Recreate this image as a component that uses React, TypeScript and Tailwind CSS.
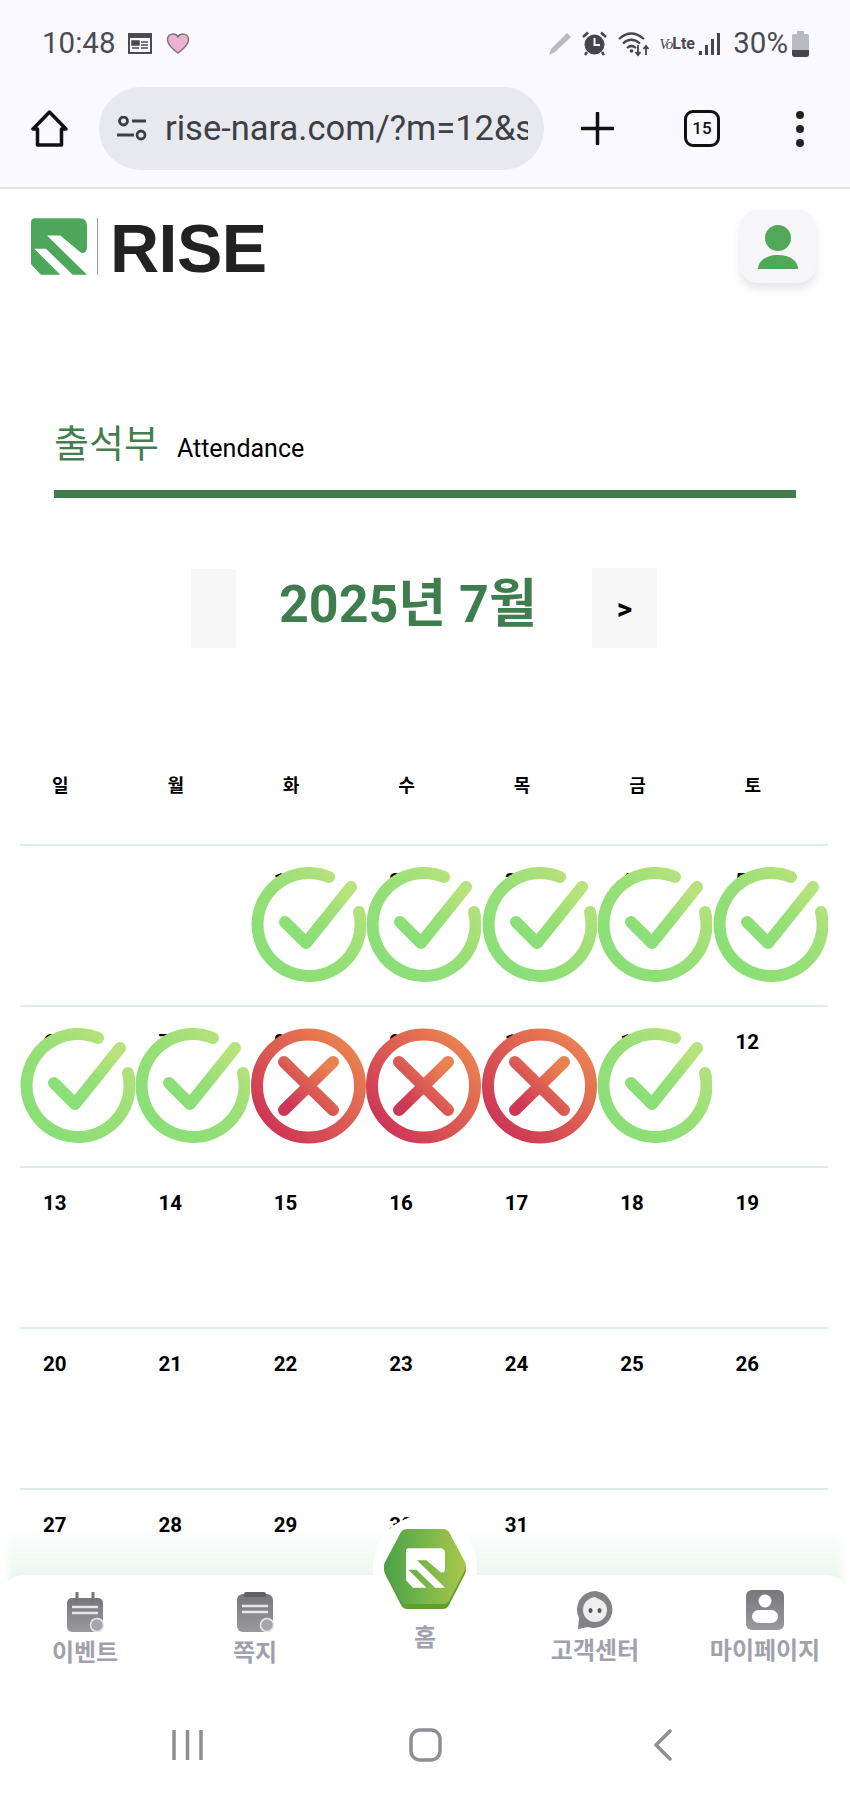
const font = "font-[Roboto,'Noto_Sans_CJK_KR',sans-serif]";

const logoPath =
  "M12 0H145Q168 0 168 22V85Q168 108 150 104L88 52H48L168 170H125L45 92H10L88 170H30L0 138V12Q0 0 12 0Z";

const weeks: (number | null)[][] = [
  [null, null, 1, 2, 3, 4, 5],
  [6, 7, 8, 9, 10, 11, 12],
  [13, 14, 15, 16, 17, 18, 19],
  [20, 21, 22, 23, 24, 25, 26],
  [27, 28, 29, 30, 31, null, null],
];

const stamps: Record<number, "ok" | "no"> = {
  1: "ok",
  2: "ok",
  3: "ok",
  4: "ok",
  5: "ok",
  6: "ok",
  7: "ok",
  8: "no",
  9: "no",
  10: "no",
  11: "ok",
};

const Stamp = ({ kind }: { kind: "ok" | "no" }) => (
  <svg viewBox="0 0 115 116" className="absolute left-0 top-[21px] w-[115px] h-[116px]">
    <defs>
      <linearGradient id="okGrad" x1="0.1" y1="0.9" x2="0.9" y2="0.1">
        <stop offset="0" stopColor="#8adf78" />
        <stop offset="0.5" stopColor="#96df76" />
        <stop offset="1" stopColor="#b8e27c" />
      </linearGradient>
      <linearGradient id="noGrad" x1="0.1" y1="0.9" x2="0.9" y2="0.1">
        <stop offset="0" stopColor="#cd3656" />
        <stop offset="1" stopColor="#ea8150" />
      </linearGradient>
    </defs>
    <circle cx="57.5" cy="58" r="46" fill="#fff" />
    {kind === "ok" ? (
      <g fill="none" stroke="url(#okGrad)" strokeWidth="12" strokeLinecap="round" strokeLinejoin="round">
        <path d="M78 10A51.500 51.500 0 1 0 108 45" />
        <path d="M34 55L55 76L100 20" />
      </g>
    ) : (
      <g fill="none" stroke="url(#noGrad)" strokeLinecap="round">
        <circle cx="57.5" cy="58" r="51.500" strokeWidth="12" />
        <path d="M33 34L82 82M82 34L33 82" strokeWidth="12" />
      </g>
    )}
  </svg>
);

const StatusIcons = () => (
  <div className="ml-auto flex items-center pr-[41px] text-[#4a4a50]">
    {/* pencil */}
    <svg viewBox="0 0 25 25" className="w-[25px] h-[25px]">
      <path d="M19 2L23 6L7 21L1 24L3 18Z" fill="#b9b9bf" />
    </svg>
    {/* alarm */}
    <svg viewBox="0 0 25 25" className="ml-[9px] w-[25px] h-[25px]">
      <circle cx="12.5" cy="13.5" r="10" fill="#45454b" />
      <path d="M1 6L6 1.500M24 6L19 1.500M5 21L3 24M20 21L22 24" stroke="#45454b" strokeWidth="2.500" />
      <path d="M12.500 7V14H18" stroke="#f9f9ff" strokeWidth="2" fill="none" />
    </svg>
    {/* wifi */}
    <svg viewBox="0 0 32 26" className="ml-[11px] w-[32px] h-[26px]" fill="none" stroke="#45454b" strokeWidth="2.200">
      <path d="M1 8Q13 -3 26 8M5 12.500Q13 5 22 12.500M9 17Q13.500 13 18 17" />
      <circle cx="13.500" cy="20" r="1.800" fill="#45454b" stroke="none" />
      <path d="M20 14V24M17.500 21L20 24L22.500 21M28 24V15M25.500 18L28 15L30.500 18" strokeWidth="1.800" />
    </svg>
    {/* volte */}
    <div className="ml-[9px] w-[33px] flex items-baseline whitespace-nowrap">
      <span className="font-['Liberation_Serif',serif] italic text-[15px] leading-none tracking-[-1px]">Vo</span>
      <span className={`${font} font-bold text-[16px] leading-none`}>Lte</span>
    </div>
    {/* signal */}
    <svg viewBox="0 0 22 26" className="ml-[7px] w-[22px] h-[26px]" fill="#45454b">
      <rect x="0" y="20" width="3" height="4" />
      <rect x="6" y="14" width="3" height="10" />
      <rect x="12" y="8" width="3" height="16" />
      <rect x="18" y="2" width="3" height="22" />
    </svg>
    <span className={`${font} ml-[12px] text-[29.5px] leading-none`}>30%</span>
    {/* battery */}
    <svg viewBox="0 0 17 26" className="ml-[4px] w-[17px] h-[26px]">
      <path d="M5 0H12V3H15Q17 3 17 5V23Q17 26 14 26H3Q0 26 0 23V5Q0 3 2 3H5Z" fill="#b9b9c0" />
      <path d="M0 19H17V23Q17 26 14 26H3Q0 26 0 23Z" fill="#45454b" />
    </svg>
  </div>
);

const BrowserBar = () => (
  <div className="bg-[#f9f9ff] h-[189px] border-b-2 border-[#e3e3e6]">
    <div className="h-[87px] pl-[42px] flex items-center">
      <span className={`${font} text-[29.5px] leading-none text-[#4a4a50]`}>10:48</span>
      <svg viewBox="0 0 24 21" className="ml-[13px] w-[24px] h-[21px]">
        <rect x="1" y="1" width="22" height="19" fill="none" stroke="#4a4a50" strokeWidth="2" />
        <rect x="1" y="1" width="22" height="4" fill="#4a4a50" />
        <path d="M4 8H11V12H4ZM13 9H20M13 12H20M13 15H20M4 15H11" fill="#4a4a50" stroke="#4a4a50" strokeWidth="1.500" />
      </svg>
      <svg viewBox="0 0 24 22" className="ml-[14px] w-[24px] h-[21px]">
        <path d="M12 21C4 15 1 11 1 7C1 3 4 1 7 1C9 1 11 2 12 4C13 2 15 1 17 1C20 1 23 3 23 7C23 11 20 15 12 21Z" fill="#efb1d1" stroke="#77727a" strokeWidth="1.500" />
      </svg>
      <StatusIcons />
    </div>
    <div className="flex items-center h-[83px] pl-[31px]">
      <svg viewBox="0 0 37 37" className="w-[37px] h-[37px]" fill="none" stroke="#111" strokeWidth="3.500" strokeLinejoin="round">
        <path d="M18.500 2L2 19H6.500V35H30.500V19H35Z" />
      </svg>
      <div className="ml-[31px] w-[445px] h-[83px] rounded-full bg-[#e8e9ee] flex items-center pl-[18px]">
        <svg viewBox="0 0 30 26" className="w-[30px] h-[26px] shrink-0" fill="none" stroke="#3c3e44" strokeWidth="2.800">
          <circle cx="6.500" cy="5" r="4" />
          <path d="M15 5H29M0 19H17" />
          <circle cx="24" cy="19" r="4" />
        </svg>
        <div className={`${font} ml-[18px] w-[363px] overflow-hidden whitespace-nowrap text-[34.5px] leading-none text-[#3d3f45]`}>
          rise-nara.com/?m=12&amp;sub=1
        </div>
      </div>
      <svg viewBox="0 0 33 33" className="ml-[37px] w-[33px] h-[33px]" stroke="#111" strokeWidth="3.500" strokeLinecap="round">
        <path d="M16.500 1V32M1 16.500H32" />
      </svg>
      <div className={`${font} ml-[70px] w-[36px] h-[37px] rounded-[9px] border-[3.5px] border-[#111] flex items-center justify-center text-[17px] font-medium text-[#111] leading-none`}>
        15
      </div>
      <div className="ml-[76px] flex flex-col gap-[6px]">
        <div className="w-2 h-2 rounded-full bg-[#222]" />
        <div className="w-2 h-2 rounded-full bg-[#222]" />
        <div className="w-2 h-2 rounded-full bg-[#222]" />
      </div>
    </div>
  </div>
);

const TopBar = () => (
  <div className="flex justify-between pl-[31px] pr-[34px] h-[94px] items-start">
    <div className="mt-[27px] flex items-center">
      <svg viewBox="0 0 168 170" className="w-[56px] h-[57px]">
        <path d={logoPath} fill="#4ea65a" />
      </svg>
      <div className="ml-[10px] w-px h-[57px] bg-[#9a9a9a]" />
      <span className="ml-[12px] pt-[4px] font-['Liberation_Sans',sans-serif] font-bold text-[68px] leading-[57px] tracking-[-0.5px] text-[#222]">RISE</span>
    </div>
    <div className="mt-[21px] w-[76px] h-[73px] rounded-[18px] bg-[#f6f6f8] shadow-[0_6px_10px_rgba(0,0,0,0.1)] flex items-center justify-center">
      <svg viewBox="0 0 40 44" className="w-[40px] h-[44px]" fill="#4fa958">
        <ellipse cx="20" cy="13" rx="13" ry="13" />
        <path d="M0 44C0 36 8 30 20 30C32 30 40 36 40 44Z" />
      </svg>
    </div>
  </div>
);

const Calendar = () => (
  <div className="relative mx-[20px] w-[808px]">
    <div className={`${font} grid grid-cols-7 mt-[117px] mb-[39px] h-[40px] items-center text-[18px] font-bold text-black`}>
      {["일", "월", "화", "수", "목", "금", "토"].map((d) => (
        <div key={d} className="pl-[32px]">{d}</div>
      ))}
    </div>
    {weeks.map((week, i) => (
      <div key={i} className="grid grid-cols-7 h-[161px] border-t-2 border-[#dcefe7]">
        {week.map((day, j) => (
          <div key={j} className={`${font} relative pl-[23px] pt-[25px] text-[20.5px] leading-[20px] font-bold text-black`}>
            {day}
            {day !== null && stamps[day] && <Stamp kind={stamps[day]} />}
          </div>
        ))}
      </div>
    ))}
  </div>
);

const EventIcon = () => (
  <svg viewBox="0 0 38 40" className="w-[38px] h-[40px]">
    <defs>
      <linearGradient id="iconGrad" x1="0" y1="0" x2="0" y2="1">
        <stop offset="0" stopColor="#77777b" />
        <stop offset="1" stopColor="#9a9a9e" />
      </linearGradient>
    </defs>
    <rect x="1" y="6" width="36" height="34" rx="5" fill="url(#iconGrad)" />
    <path d="M11 0V10M27 0V10" stroke="#77777b" strokeWidth="3" strokeLinecap="round" />
    <path d="M6 15H32M6 21H32" stroke="#e8e8ea" strokeWidth="2.500" />
    <circle cx="31" cy="33" r="6.500" fill="#a6a6aa" stroke="#e8e8ea" strokeWidth="1.500" />
  </svg>
);

const NoteIcon = () => (
  <svg viewBox="0 0 38 40" className="w-[38px] h-[40px]">
    <rect x="1" y="2" width="36" height="38" rx="6" fill="url(#iconGrad)" />
    <rect x="8" y="0" width="22" height="5" rx="2" fill="#616165" />
    <path d="M6 14H32M6 20H32" stroke="#e8e8ea" strokeWidth="2.500" />
    <circle cx="31" cy="33" r="6.500" fill="#a6a6aa" stroke="#e8e8ea" strokeWidth="1.500" />
  </svg>
);

const ChatIcon = () => (
  <svg viewBox="0 0 38 40" className="w-[38px] h-[40px]">
    <path d="M19 1A18.500 18.500 0 1 1 12 37L2 39L3 28A18.500 18.500 0 0 1 19 1Z" fill="#838387" />
    <path d="M19 7C21 9 31 10 31 20A12 12 0 0 1 7 20C7 13 12 8 19 7Z" fill="#eeeeef" />
    <ellipse cx="14.500" cy="20.500" rx="2" ry="2.500" fill="#55555a" />
    <ellipse cx="23.500" cy="20.500" rx="2" ry="2.500" fill="#55555a" />
  </svg>
);

const MyIcon = () => (
  <svg viewBox="0 0 38 40" className="w-[38px] h-[40px]">
    <rect x="0" y="0" width="38" height="40" rx="6" fill="url(#iconGrad)" />
    <circle cx="19" cy="11" r="6.500" fill="#fff" />
    <rect x="6" y="20" width="26" height="13" rx="6.500" fill="#fff" />
  </svg>
);

const navItems = [
  { label: "이벤트", icon: <EventIcon />, pad: "pt-[17px]" },
  { label: "쪽지", icon: <NoteIcon />, pad: "pt-[17px]" },
  { label: "홈", icon: null, pad: "pt-[51px]" },
  { label: "고객센터", icon: <ChatIcon />, pad: "pt-[15px]" },
  { label: "마이페이지", icon: <MyIcon />, pad: "pt-[15px]" },
];

const BottomNav = () => (
  <div className="absolute left-0 right-0 bottom-0">
    <div className="absolute left-[373px] -top-[60px] w-[104px] h-[104px] rounded-full bg-white z-10" />
    <svg viewBox="0 0 84 80" className="absolute left-[383px] -top-[46px] w-[84px] h-[80px] z-20">
      <defs>
        <linearGradient id="hexGrad" x1="0" y1="0" x2="1" y2="0">
          <stop offset="0" stopColor="#4aa24b" />
          <stop offset="1" stopColor="#a9c84a" />
        </linearGradient>
      </defs>
      <path d="M24 1H60Q64 1 66 4L82 35Q84 40 82 45L66 76Q64 80 60 80H24Q20 80 18 76L2 45Q0 40 2 35L18 4Q20 1 24 1Z" fill="#5f9e35" />
      <path d="M24 0H60Q64 0 66 3L82 33Q84 37 82 41L66 72Q64 75 60 75H24Q20 75 18 72L2 41Q0 37 2 33L18 3Q20 0 24 0Z" fill="url(#hexGrad)" />
      <svg x="23" y="19" width="39" height="40" viewBox="0 0 168 170">
        <path d={logoPath} fill="#fff" />
      </svg>
    </svg>
    <div className={`${font} rounded-t-[24px] bg-white h-[219px] relative`}>
      <div className="grid grid-cols-5 h-[100px]">
        {navItems.map((item) => (
          <div key={item.label} className={`flex flex-col items-center relative z-30 ${item.pad}`}>
            {item.icon}
            <span className={`text-[24px] leading-[24px] font-bold whitespace-nowrap text-[#a0a1ad] ${item.icon ? "mt-[9px]" : ""}`}>
              {item.label}
            </span>
          </div>
        ))}
      </div>
      <div className="mt-[53px] mx-auto w-[714px] grid grid-cols-3 items-center justify-items-center">
        <svg viewBox="0 0 31 32" className="w-[31px] h-[32px]" stroke="#8e8e93" strokeWidth="3.500">
          <path d="M2 1V31M15.500 1V31M29 1V31" />
        </svg>
        <svg viewBox="0 0 33 34" className="w-[33px] h-[34px]" fill="none" stroke="#8e8e93" strokeWidth="3.500">
          <rect x="2" y="2" width="29" height="30" rx="9" />
        </svg>
        <svg viewBox="0 0 18 32" className="w-[18px] h-[32px]" fill="none" stroke="#8e8e93" strokeWidth="3.500" strokeLinecap="round" strokeLinejoin="round">
          <path d="M16 2L2 16L16 30" />
        </svg>
      </div>
    </div>
  </div>
);

const App = () => {
  return (
    <div className="relative w-[850px] h-[1794px] overflow-hidden bg-white">
      <BrowserBar />
      <TopBar />

      {/* Title */}
      <div className={`${font} mx-[54px] w-[742px] mt-[134px] h-[73px] flex items-center pb-[20px]`}>
        <span className="text-[38px] leading-none text-[#437d50]">출석부</span>
        <span className="ml-[18px] mt-[10px] text-[25px] leading-none text-black">Attendance</span>
      </div>
      <div className="mx-[54px] w-[742px] h-2 bg-[#437c4e]" />

      {/* Month */}
      <div className={`${font} mt-[70px] pl-[191px] flex items-center`}>
        <div className="w-[45px] h-[79px] bg-[#f7f7f7]" />
        <div className="ml-[43px] w-[313px] pb-[6px] text-[52px] leading-none font-bold text-[#3f7d4f] whitespace-nowrap">2025년 7월</div>
        <div className="w-[65px] h-[80px] bg-[#f7f7f7] flex items-center justify-center text-[30px] font-bold text-black">&gt;</div>
      </div>

      {/* 하단 그라데이션 */}
      <div className="absolute left-[8px] right-[8px] top-[1528px] h-[60px] blur-[3px] bg-gradient-to-b from-transparent to-[#e6f6ea]" />

      <Calendar />
      <BottomNav />
    </div>
  );
};

export default App;
